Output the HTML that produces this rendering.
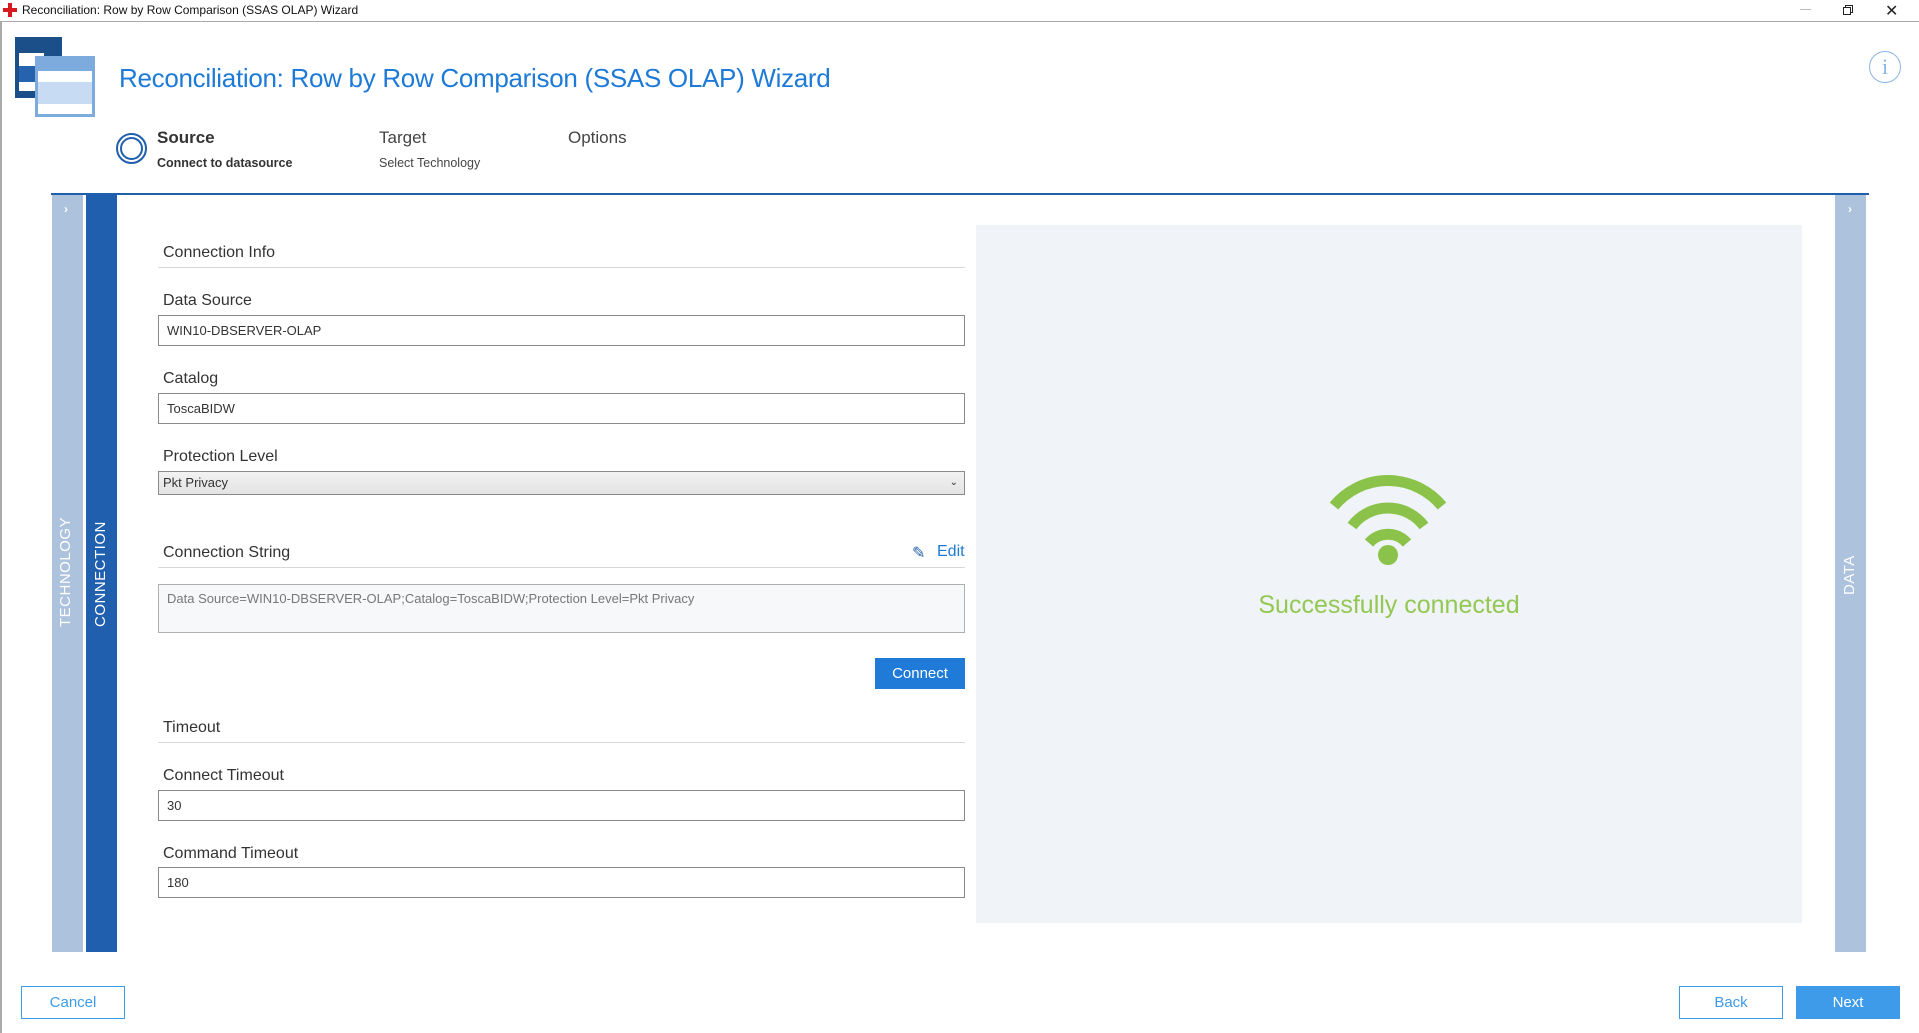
<!DOCTYPE html>
<html><head><meta charset="utf-8"><style>
*{box-sizing:border-box;margin:0;padding:0}
body{width:1919px;height:1033px;background:#fff;font-family:"Liberation Sans",sans-serif;position:relative;overflow:hidden;color:#333}
.a{position:absolute}
.lbl{position:absolute;left:163px;font-size:16px;color:#333}
.inp{position:absolute;left:158px;width:807px;border:1px solid #8a8a8a;background:#fff;font-size:13px;padding-left:8px;color:#333}
.hr{position:absolute;left:158px;width:807px;height:1px;background:#d8d8d8}
.vt{position:absolute;transform:rotate(-90deg);transform-origin:left top;font-size:15px;white-space:nowrap;letter-spacing:.5px}
.btn{position:absolute;font-size:15px;text-align:center}
</style></head><body>
<div class="a" style="left:0;top:0;width:1919px;height:22px;border-bottom:1px solid #aaa"></div>
<div class="a" style="left:0;top:22px;width:2px;height:1011px;background:#aaa"></div>
<div class="a" style="left:3px;top:8px;width:14px;height:4px;background:#d71920"></div>
<div class="a" style="left:8px;top:3px;width:4px;height:14px;background:#d71920"></div>
<div class="a" style="left:22px;top:3px;font-size:12px;color:#111">Reconciliation: Row by Row Comparison (SSAS OLAP) Wizard</div>
<div class="a" style="left:1800px;top:9px;width:11px;height:1px;background:#bbb"></div>
<div class="a" style="left:1845px;top:5px;width:8px;height:8px;border:1px solid #222"></div>
<div class="a" style="left:1843px;top:7px;width:8px;height:8px;border:1px solid #222;background:#fff"></div>
<div class="a" style="left:1885px;top:1px;font-size:16px;color:#222">✕</div>

<div class="a" style="left:15px;top:37px;width:47px;height:61px;background:#1b4f8a"></div>
<div class="a" style="left:19px;top:53px;width:25px;height:38px;background:#fff"></div>
<div class="a" style="left:19px;top:66px;width:25px;height:16px;background:#2563ae"></div>
<div class="a" style="left:35px;top:56px;width:60px;height:61px;background:#7eabde"></div>
<div class="a" style="left:38px;top:71px;width:54px;height:43px;background:#fff"></div>
<div class="a" style="left:38px;top:82px;width:54px;height:22px;background:#c7dcf3"></div>
<div class="a" style="left:119px;top:63px;font-size:26px;letter-spacing:-0.3px;color:#1d7ad6">Reconciliation: Row by Row Comparison (SSAS OLAP) Wizard</div>
<div class="a" style="left:1869px;top:51px;width:32px;height:32px;border:1.5px solid #8ab4e4;border-radius:50%;color:#8ab4e4;font:22px 'Liberation Serif',serif;text-align:center;line-height:29px">i</div>

<div class="a" style="left:116px;top:133px;width:31px;height:31px;border:2px solid #1f5fae;border-radius:50%"></div>
<div class="a" style="left:120px;top:137px;width:23px;height:23px;border:2px solid #1f5fae;border-radius:50%"></div>
<div class="a" style="left:157px;top:128px;font-size:17px;font-weight:bold;color:#333">Source</div>
<div class="a" style="left:157px;top:156px;font-size:12.5px;font-weight:bold;color:#333">Connect to datasource</div>
<div class="a" style="left:379px;top:128px;font-size:17px;color:#444">Target</div>
<div class="a" style="left:379px;top:156px;font-size:12.5px;color:#444">Select Technology</div>
<div class="a" style="left:568px;top:128px;font-size:17px;color:#444">Options</div>

<div class="a" style="left:51px;top:193px;width:1818px;height:2px;background:#1f5fae"></div>
<div class="a" style="left:52px;top:195px;width:31px;height:757px;background:#adc2dc"></div>
<div class="a" style="left:86px;top:195px;width:31px;height:757px;background:#1f5fae"></div>
<div class="a" style="left:64px;top:202px;color:#fff;font-size:12px;font-weight:bold">›</div>
<div class="vt" style="left:57px;top:627px;color:#fff">TECHNOLOGY</div>
<div class="vt" style="left:92px;top:627px;color:#fff">CONNECTION</div>
<div class="a" style="left:1835px;top:195px;width:31px;height:757px;background:#adc2dc"></div>
<div class="a" style="left:1848px;top:202px;color:#fff;font-size:12px;font-weight:bold">›</div>
<div class="vt" style="left:1841px;top:595px;color:#fff">DATA</div>

<div class="lbl" style="top:244px">Connection Info</div><div class="hr" style="top:267px"></div>
<div class="lbl" style="top:292px">Data Source</div>
<div class="inp" style="top:315px;height:31px;line-height:29px">WIN10-DBSERVER-OLAP</div>
<div class="lbl" style="top:370px">Catalog</div>
<div class="inp" style="top:393px;height:31px;line-height:29px">ToscaBIDW</div>
<div class="lbl" style="top:448px">Protection Level</div>
<div class="inp" style="top:471px;height:24px;line-height:22px;background:linear-gradient(#f2f2f2,#e3e3e3);padding-left:4px">Pkt Privacy<span style="position:absolute;right:6px;font-size:10px">⌄</span></div>
<div class="lbl" style="top:544px">Connection String</div>
<div class="a" style="left:912px;top:543px;font-size:16px;color:#1f5fae">✎</div>
<div class="a" style="left:937px;top:543px;font-size:16px;color:#1d7ad6">Edit</div>
<div class="hr" style="top:567px"></div>
<div class="inp" style="top:584px;height:49px;background:#f7f8fa;border-color:#b0b0b0;color:#777;padding-top:6px">Data Source=WIN10-DBSERVER-OLAP;Catalog=ToscaBIDW;Protection Level=Pkt Privacy</div>
<div class="btn" style="left:875px;top:658px;width:90px;height:31px;background:#1f7ad8;color:#fff;line-height:31px">Connect</div>
<div class="lbl" style="top:719px">Timeout</div><div class="hr" style="top:742px"></div>
<div class="lbl" style="top:767px">Connect Timeout</div>
<div class="inp" style="top:790px;height:31px;line-height:29px">30</div>
<div class="lbl" style="top:845px">Command Timeout</div>
<div class="inp" style="top:867px;height:31px;line-height:29px">180</div>

<div class="a" style="left:976px;top:225px;width:826px;height:698px;background:#f0f3f7"></div>
<svg class="a" style="left:1328px;top:468px" width="120" height="100" viewBox="0 0 120 100">
<g fill="none" stroke="#8bc34a" stroke-width="11">
<path d="M6 38 A70 70 0 0 1 114 38"/>
<path d="M24 58 A45 45 0 0 1 96 58"/>
<path d="M41 75 A25 25 0 0 1 79 75"/>
</g>
<ellipse cx="60" cy="87" rx="10" ry="10" fill="#8bc34a"/>
</svg>
<div class="a" style="left:976px;width:826px;top:591px;text-align:center;font-size:25px;color:#93c853">Successfully connected</div>

<div class="btn" style="left:21px;top:986px;width:104px;height:33px;border:1px solid #3d9be9;color:#3d9be9;line-height:31px">Cancel</div>
<div class="btn" style="left:1679px;top:986px;width:104px;height:33px;border:1px solid #3d9be9;color:#3d9be9;line-height:31px">Back</div>
<div class="btn" style="left:1796px;top:986px;width:104px;height:33px;background:#3d9be9;color:#fff;line-height:33px">Next</div>
</body></html>
